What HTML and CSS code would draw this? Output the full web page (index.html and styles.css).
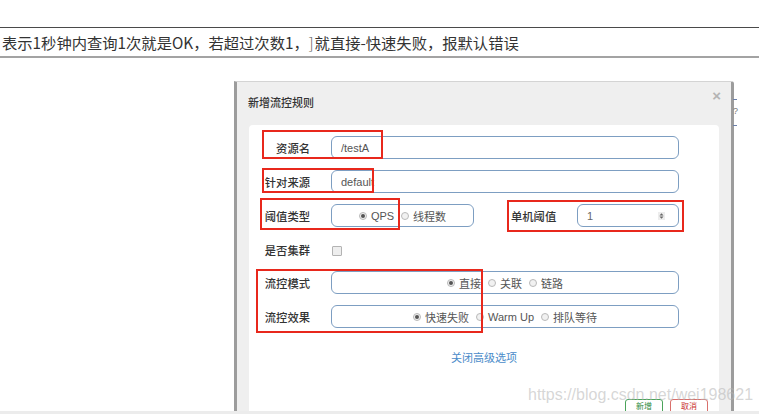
FILE: index.html
```html
<!DOCTYPE html>
<html lang="zh-CN">
<head>
<meta charset="utf-8">
<title>新增流控规则</title>
<link rel="stylesheet" href="styles.css">
</head>
<body>
<div class="topbar">表示1秒钟内查询1次就是OK，若超过次数1，<span class="caret">]</span>就直接-快速失败，报默认错误</div>

<div class="bg-hint">
  <span class="hint-line hint-line-a"></span>
  <span class="hint-q">?</span>
  <span class="hint-line hint-line-b"></span>
</div>

<div class="modal">
  <div class="modal-header">
    <span class="modal-title">新增流控规则</span>
    <span class="modal-close">×</span>
  </div>
  <div class="panel">
    <div class="form-row">
      <label class="label">资源名</label>
      <div class="input input-wide">/testA</div>
    </div>
    <div class="form-row">
      <label class="label">针对来源</label>
      <div class="input input-wide">default</div>
    </div>
    <div class="form-row">
      <label class="label">阈值类型</label>
      <div class="input input-group input-small">
        <span class="radio checked"></span><span class="radio-text">QPS</span>
        <span class="radio"></span><span class="radio-text">线程数</span>
      </div>
      <label class="label label-inline">单机阈值</label>
      <div class="input input-number">
        <span>1</span>
        <svg class="spinner" width="7" height="8" viewBox="0 0 7 8">
          <rect x="0" y="0" width="7" height="8" fill="#ededed"/>
          <path d="M3.5 1.2 L5.5 3.4 L1.5 3.4 Z" fill="#666"/>
          <path d="M3.5 6.8 L5.5 4.6 L1.5 4.6 Z" fill="#666"/>
        </svg>
      </div>
    </div>
    <div class="form-row form-row-check">
      <label class="label">是否集群</label>
      <span class="checkbox"></span>
    </div>
    <div class="form-row">
      <label class="label">流控模式</label>
      <div class="input input-group input-wide">
        <span class="radio checked"></span><span class="radio-text">直接</span>
        <span class="radio"></span><span class="radio-text">关联</span>
        <span class="radio"></span><span class="radio-text">链路</span>
      </div>
    </div>
    <div class="form-row">
      <label class="label">流控效果</label>
      <div class="input input-group input-wide">
        <span class="radio checked"></span><span class="radio-text">快速失败</span>
        <span class="radio"></span><span class="radio-text">Warm Up</span>
        <span class="radio"></span><span class="radio-text">排队等待</span>
      </div>
    </div>
    <div class="link-row"><a class="link">关闭高级选项</a></div>
    <div class="button-row">
      <span class="btn btn-ok">新增</span>
      <span class="btn btn-cancel">取消</span>
    </div>
  </div>
</div>

<div class="mark mark-a"></div>
<div class="mark mark-b"></div>
<div class="mark mark-c"></div>
<div class="mark mark-d"></div>
<div class="mark mark-e"></div>

<div class="watermark">https://blog.csdn.net/wei198621</div>
<div class="bottom-band"></div>
</body>
</html>
```

FILE: styles.css
```css
html, body {
  margin: 0;
  padding: 0;
}
body {
  width: 759px;
  height: 414px;
  overflow: hidden;
  position: relative;
  background: #ffffff;
  font-family: "Liberation Sans", "Noto Sans CJK SC", sans-serif;
  font-size: 11px;
  color: #333333;
}

.topbar {
  margin-top: 27px;
  height: 28px;
  line-height: 28px;
  border-top: 1px solid #4a4a4a;
  border-bottom: 2px solid #a3a3a3;
  padding-left: 2px;
  font-family: "Noto Sans CJK SC", sans-serif;
  font-size: 15.3px;
  color: #333333;
  white-space: nowrap;
  text-spacing-trim: space-all;
}
.caret {
  display: inline-block;
  margin-left: 0;
  margin-right: 1px;
  color: #555;
  font-weight: 300;
}

.bg-hint {
  position: absolute;
  left: 733px;
  top: 99px;
  width: 8px;
  height: 30px;
}
.hint-line {
  position: absolute;
  left: 0;
  width: 4px;
  height: 1px;
  background: #6b7fa8;
}
.hint-line-a { top: 0; }
.hint-line-b { top: 26px; }
.hint-q {
  position: absolute;
  left: 0;
  top: 7px;
  font-size: 9px;
  line-height: 10px;
  color: #777;
}

.modal {
  margin-top: 23px;
  margin-left: 234px;
  width: 500px;
  height: 340px;
  box-sizing: border-box;
  background: #efefef;
  border-left: 3px solid #9c9c9c;
  border-right: 3px solid #9c9c9c;
  border-top: 1px solid #d4d4d4;
  border-top-right-radius: 3px;
  display: flex;
  flex-direction: column;
}

.modal-header {
  height: 43px;
  box-sizing: border-box;
  padding: 13px 10px 0 11px;
  display: flex;
  justify-content: space-between;
  align-items: flex-start;
}
.modal-title {
  font-family: "Noto Sans CJK SC", sans-serif;
  font-size: 11px;
  font-weight: 500;
  line-height: 14px;
  color: #333;
}
.modal-close {
  margin-top: -6px;
  font-size: 15px;
  line-height: 14px;
  font-weight: bold;
  color: #b4b4b4;
}

.panel {
  flex: 1;
  margin: 0 12px;
  background: #ffffff;
  border-radius: 4px 4px 0 0;
  padding-top: 11px;
}

.form-row {
  display: flex;
  align-items: center;
  height: 23px;
  margin-bottom: 11px;
}
.form-row-check {
  height: 24px;
  margin-bottom: 9px;
}

.label {
  width: 61px;
  margin-right: 21px;
  text-align: right;
  font-family: "Noto Sans CJK SC", sans-serif;
  font-weight: 500;
  font-size: 11.3px;
  color: #333333;
  white-space: nowrap;
}
.label-inline {
  width: 45px;
  margin-left: 37px;
  text-align: left;
}

.input {
  height: 23px;
  box-sizing: border-box;
  border: 1px solid #7d9ec2;
  border-radius: 6px;
  padding-left: 9px;
  display: flex;
  align-items: center;
  font-size: 11px;
  color: #555555;
  white-space: nowrap;
}
.input-wide { width: 348px; }
.input-small { width: 143px; }
.input-number {
  width: 102px;
  justify-content: space-between;
  padding-right: 13px;
  color: #666;
}
.spinner {
  display: block;
}

.input-group {
  justify-content: center;
  padding-left: 0;
  font-family: "Liberation Sans", "Noto Sans CJK SC", sans-serif;
  color: #555;
}
.radio {
  width: 8px;
  height: 8px;
  box-sizing: border-box;
  border: 1px solid #b9b9b9;
  border-radius: 50%;
  background: #f1f1f1;
  margin-right: 4px;
  position: relative;
  flex: 0 0 auto;
}
.radio.checked::after {
  content: "";
  position: absolute;
  left: 1px;
  top: 1px;
  width: 4px;
  height: 4px;
  border-radius: 50%;
  background: #555555;
}
.radio-text {
  margin-right: 7px;
  font-size: 11px;
}
.radio-text:last-child {
  margin-right: 0;
}

.checkbox {
  width: 8px;
  height: 8px;
  margin-left: 1px;
  margin-top: 2px;
  border: 1px solid #b3b3b3;
  border-radius: 1px;
  background: #eeeeee;
}

.link-row {
  margin-top: 22px;
  text-align: center;
  line-height: 14px;
}
.link {
  font-family: "Noto Sans CJK SC", sans-serif;
  font-size: 11px;
  color: #4a8bc9;
}

.button-row {
  margin-top: 34px;
  padding-right: 11px;
  display: flex;
  justify-content: flex-end;
  gap: 7px;
}
.btn {
  width: 38px;
  height: 22px;
  box-sizing: border-box;
  border: 1px solid;
  border-radius: 3px;
  text-align: center;
  font-family: "Noto Sans CJK SC", sans-serif;
  font-size: 8px;
  line-height: 12px;
}
.btn-ok {
  border-color: #4aa35a;
  color: #2f8a40;
}
.btn-cancel {
  border-color: #d9706c;
  color: #c9302c;
}

.mark {
  position: absolute;
  box-sizing: border-box;
  border: 2px solid #e8281c;
}
.mark-a { left: 262px; top: 130px; width: 121px; height: 29px; }
.mark-b { left: 262px; top: 168px; width: 112px; height: 25px; }
.mark-c { left: 260px; top: 198px; width: 140px; height: 32px; }
.mark-d { left: 507px; top: 200px; width: 177px; height: 32px; }
.mark-e { left: 256px; top: 269px; width: 227px; height: 64px; }

.watermark {
  position: absolute;
  left: 528px;
  top: 386px;
  font-family: "Liberation Sans", sans-serif;
  font-size: 16px;
  line-height: 18px;
  color: rgba(180, 180, 180, 0.55);
  white-space: nowrap;
}

.bottom-band {
  position: absolute;
  left: 0;
  top: 411px;
  width: 759px;
  height: 3px;
  background: #ececec;
}
```
